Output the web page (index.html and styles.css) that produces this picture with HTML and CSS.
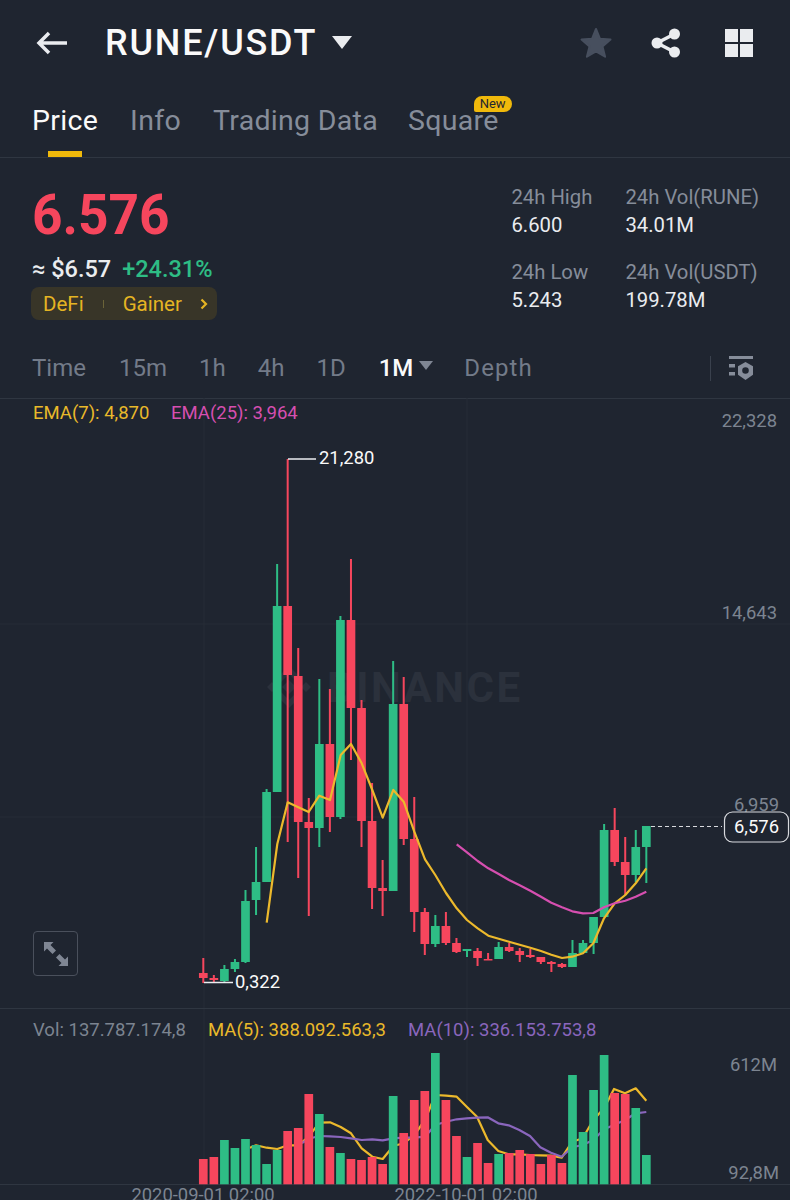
FILE: index.html
```html
<!DOCTYPE html>
<html lang="en">
  <head>
    <meta charset="UTF-8" />
    <title>RUNE/USDT</title>
    <link rel="stylesheet" href="styles.css">
  </head>
  <body>
    <header class="top-bar">
      <svg class="back-icon" viewBox="0 0 32 24"><path d="M31 12H3M13 2 3 12l10 10" /></svg>
      <h1 class="pair">RUNE/USDT</h1>
      <span class="pair-caret"></span>
      <svg class="star-icon" viewBox="0 0 32 32"><path d="M16 2l4 9.800 10.500.8-8 6.800 2.600 10.300L16 24.300 6.900 29.700l2.600-10.300-8-6.800 10.500-.8z" /></svg>
      <svg class="share-icon" viewBox="0 0 30 30">
        <circle cx="23.500" cy="6" r="5.500" />
        <circle cx="6" cy="15" r="5.500" />
        <circle cx="23.500" cy="24" r="5.500" />
        <path d="M23.500 6 6 15l17.500 9" />
      </svg>
      <div class="grid-icon"><i></i><i></i><i></i><i></i></div>
    </header>

    <nav class="tabs">
      <a class="tab active">Price</a>
      <a class="tab">Info</a>
      <a class="tab">Trading Data</a>
      <a class="tab tab-square">Square<span class="new-badge">New</span></a>
    </nav>

    <section class="ticker">
      <div class="ticker-left">
        <div class="last-price">6.576</div>
        <div class="fiat-row">
          <span class="fiat">≈ $6.57</span>
          <span class="change">+24.31%</span>
        </div>
        <div class="tag-box">
          <span>DeFi</span>
          <span class="tag-sep"></span>
          <span>Gainer</span>
          <svg class="tag-arrow" viewBox="0 0 8 12"><path d="M1.500 1.500 6 6l-4.500 4.500" /></svg>
        </div>
      </div>
      <div class="stats">
        <div class="stat"><label>24h High</label><b>6.600</b></div>
        <div class="stat"><label>24h Vol(RUNE)</label><b>34.01M</b></div>
        <div class="stat"><label>24h Low</label><b>5.243</b></div>
        <div class="stat"><label>24h Vol(USDT)</label><b>199.78M</b></div>
      </div>
    </section>

    <nav class="intervals">
      <a class="int int-time">Time</a>
      <a class="int int-15m">15m</a>
      <a class="int int-1h">1h</a>
      <a class="int int-4h">4h</a>
      <a class="int int-1d">1D</a>
      <a class="int int-1m">1M</a>
      <span class="int-caret"></span>
      <a class="int int-depth">Depth</a>
      <span class="int-sep"></span>
      <svg class="settings-icon" viewBox="0 0 26 26">
        <path d="M1 1h24v3H1zM1 9h6v3.500H1zM1 17h6v3.500H1z" />
        <path fill-rule="evenodd" d="M17.500 7l7.500 4.200v8.600L17.500 25 10 19.800v-8.600zM17.500 12.200a3.300 3.300 0 1 0 0 6.600 3.300 3.300 0 0 0 0-6.600z" />
      </svg>
    </nav>

    <div class="chart-wrap">
      <svg id="chart" class="chart" viewBox="0 398 790 802">
        <g class="grid-lines">
          <path d="M0 624H790M0 817H790M204 398V1200M467 398V1200" />
        </g>
        <path class="section-line" d="M0 1008.500H790M0 1184.500H790" />

        <text class="watermark" x="327" y="702">BINANCE</text>
        <path class="watermark-logo" d="M289 680l7 7-7 7-7-7zM272 682l5 5-5 5-5-5zM306 682l5 5-5 5-5-5zM289 666l13 13-4 4-9-9-9 9-4-4zM289 708l13-13-4-4-9 9-9-9-4 4z" />

        <g id="candles"></g>
        <g id="emaLines"></g>

        <path class="mark-line" d="M288 459H316M204 982.500H233" />
        <text class="mark" x="319" y="464">21,280</text>
        <text class="mark" x="235" y="988">0,322</text>

        <text class="legend ema7" x="33" y="419">EMA(7): 4,870</text>
        <text class="legend ema25" x="171" y="419">EMA(25): 3,964</text>
        <text class="axis" x="777" y="427" text-anchor="end">22,328</text>
        <text class="axis" x="777" y="619" text-anchor="end">14,643</text>
        <text class="axis" x="779" y="811" text-anchor="end">6,959</text>

        <path class="last-line" d="M651 826.500H722" />
        <rect class="last-pill" x="724.500" y="812" width="64" height="30" rx="8" />
        <text class="last-text" x="756.500" y="833" text-anchor="middle">6,576</text>

        <text class="legend vol" x="33" y="1036">Vol: 137.787.174,8</text>
        <text class="legend ema7" x="208" y="1036">MA(5): 388.092.563,3</text>
        <text class="legend ma10" x="408" y="1036">MA(10): 336.153.753,8</text>

        <g id="volLines"></g>
        <g id="volBars"></g>

        <text class="axis" x="777" y="1071" text-anchor="end">612M</text>
        <text class="axis" x="779" y="1179" text-anchor="end">92,8M</text>
        <text class="axis" x="203" y="1201" text-anchor="middle">2020-09-01 02:00</text>
        <text class="axis" x="466" y="1201" text-anchor="middle">2022-10-01 02:00</text>
      </svg>

      <button class="expand-btn">
        <svg viewBox="0 0 26 26"><path d="M1 1h9.500L7.500 4l5.500 5.500-3.500 3.500L4 7.500 1 10.500zM25 25h-9.500l3-3-5.500-5.500 3.500-3.500L22 18.500l3-3z" /></svg>
      </button>
    </div>

    <script src="chart.js"></script>
  </body>
</html>
```

FILE: styles.css
```css
* {
  box-sizing: border-box;
}

html,
body {
  margin: 0;
  height: 1200px;
  overflow: hidden;
}

body {
  font-family: Roboto, "Liberation Sans", sans-serif;
  background-color: #1f2530;
  color: #eaecef;
}

/* top bar */
.top-bar {
  display: flex;
  align-items: center;
  height: 86px;
  padding-left: 36px;
}

.back-icon {
  width: 32px;
  height: 24px;
  fill: none;
  stroke: #eaecef;
  stroke-width: 3.5;
}

.pair {
  margin: 0 0 0 37px;
  font-size: 36px;
  font-weight: 500;
  letter-spacing: 1.8px;
  color: #fafafa;
}

.pair-caret {
  width: 0;
  height: 0;
  margin: 0 0 2px 15px;
  border-left: 10px solid transparent;
  border-right: 10px solid transparent;
  border-top: 13px solid #eaecef;
}

.star-icon {
  width: 32px;
  height: 32px;
  margin-left: auto;
  fill: #474f5e;
  stroke: #474f5e;
  stroke-width: 2;
  stroke-linejoin: round;
}

.share-icon {
  width: 30px;
  height: 30px;
  margin-left: 39px;
  fill: #eaecef;
  stroke: #eaecef;
}

.share-icon circle {
  stroke: none;
}

.share-icon path {
  fill: none;
  stroke-width: 3.5;
}

.grid-icon {
  display: grid;
  grid-template-columns: 13px 13px;
  grid-template-rows: 13px 13px;
  gap: 2px;
  margin: 0 37px 0 44px;
}

.grid-icon i {
  background-color: #eaecef;
}

/* main tabs */
.tabs {
  display: flex;
  gap: 32px;
  height: 72px;
  padding: 13px 0 0 32px;
  border-bottom: 1px solid #2f3641;
}

.tab {
  position: relative;
  font-size: 28.500px;
  line-height: 44px;
  letter-spacing: 0.3px;
  color: #868d9a;
}

.tab-square {
  margin-left: -2px;
}

.tab.active {
  color: #fafafa;
}

.tab.active::after {
  content: "";
  position: absolute;
  left: 16px;
  right: 16px;
  top: 52px;
  height: 6px;
  background-color: #f0b90b;
}

.new-badge {
  position: absolute;
  top: -3px;
  right: -13px;
  padding: 0 6px;
  font-size: 13px;
  line-height: 16px;
  letter-spacing: 0;
  color: #1f2530;
  background-color: #f0b90b;
  border-radius: 8px 8px 8px 2px;
}

/* price block */
.ticker {
  display: flex;
  justify-content: space-between;
  height: 185px;
  padding: 26px 31px 0 32px;
}

.last-price {
  font-size: 56px;
  font-weight: 700;
  line-height: 62px;
  color: #f6465d;
  transform: scaleX(0.95);
  transform-origin: left center;
}

.fiat-row {
  display: flex;
  gap: 11px;
  margin-top: 8px;
  font-size: 23.500px;
  font-weight: 500;
  line-height: 30px;
}

.change {
  color: #2ebd85;
}

.tag-box {
  display: flex;
  align-items: center;
  width: 186px;
  height: 33px;
  margin: 3px 0 0 -1px;
  padding-left: 12px;
  font-size: 20.500px;
  color: #e5b423;
  background-color: #383528;
  border-radius: 8px;
}

.tag-sep {
  width: 1px;
  height: 8px;
  margin: 0 19px;
  background-color: #6b6338;
}

.tag-arrow {
  width: 8px;
  height: 12px;
  margin-left: 18px;
  fill: none;
  stroke: #e5b423;
  stroke-width: 2.2;
}

.stats {
  display: grid;
  grid-template-columns: 114px auto;
  align-content: start;
  row-gap: 20px;
  margin-top: -1px;
}

.stat label {
  display: block;
  font-size: 20.300px;
  line-height: 28px;
  color: #868d9a;
}

.stat b {
  display: block;
  margin-top: 1px;
  font-size: 20.300px;
  font-weight: 400;
  line-height: 26px;
  color: #eaecef;
}

/* interval row */
.intervals {
  display: flex;
  align-items: center;
  height: 50px;
  margin-bottom: 5px;
  padding-left: 32px;
  font-size: 24px;
  color: #737b89;
}

.int-15m {
  margin-left: 33px;
}

.int-1h,
.int-4h,
.int-1d {
  margin-left: 32px;
}

.int-1m {
  margin-left: 33px;
  font-weight: 500;
  color: #fafafa;
}

.int-caret {
  width: 0;
  height: 0;
  margin: 0 0 5px 6px;
  border-left: 7px solid transparent;
  border-right: 7px solid transparent;
  border-top: 9px solid #7f8693;
}

.int-depth {
  margin-left: 31px;
  letter-spacing: 1.1px;
}

.int-sep {
  width: 1px;
  height: 25px;
  margin-left: auto;
  background-color: #3a414d;
}

.settings-icon {
  width: 26px;
  height: 26px;
  margin: 0 36px 0 17px;
  fill: #868d9a;
}

/* chart */
.chart-wrap {
  position: relative;
  height: 802px;
  border-top: 1px solid #2f3641;
}

.chart {
  display: block;
  width: 790px;
  height: 802px;
  margin-top: -1px;
}

.grid-lines path {
  fill: none;
  stroke: #262c37;
  stroke-width: 1;
}

.section-line {
  fill: none;
  stroke: #2f3641;
  stroke-width: 1;
}

.watermark {
  font-size: 42px;
  font-weight: 700;
  letter-spacing: 2.500px;
  fill: #2b313c;
}

.watermark-logo {
  fill: #2b313c;
}

.mark-line {
  fill: none;
  stroke: #eaecef;
  stroke-width: 1.5;
}

.mark {
  font-size: 18.400px;
  fill: #fafafa;
}

.legend {
  font-size: 18.500px;
}

.ema7 {
  fill: #e9b92a;
}

.ema25 {
  fill: #d64fb0;
}

.ma10 {
  fill: #8a66bd;
}

.vol {
  fill: #7c8490;
}

.axis {
  font-size: 18.400px;
  fill: #7c8490;
}

.last-line {
  fill: none;
  stroke: #d8dade;
  stroke-width: 1;
  stroke-dasharray: 4 3;
}

.last-pill {
  fill: #1f2530;
  stroke: #d8dade;
  stroke-width: 1.2;
}

.last-text {
  font-size: 18.400px;
  fill: #fafafa;
}

.expand-btn {
  position: absolute;
  left: 33px;
  top: 532px;
  display: flex;
  align-items: center;
  justify-content: center;
  width: 45px;
  height: 45px;
  padding: 0;
  background: none;
  border: 1.5px solid #4a505c;
  border-radius: 4px;
}

.expand-btn svg {
  width: 26px;
  height: 26px;
  fill: #7f8693;
}
```

FILE: chart.js
```js
// month candles, values are already page y coordinates
// [wick top, body top, body bottom, wick bottom, up?]
const candles = [
  [958, 973, 978, 983, 0], [975, 978, 980, 982, 0], [965, 969, 981, 982, 1],
  [959, 962, 969, 972, 1], [890, 901, 962, 963, 1], [847, 882, 900, 915, 1],
  [789, 792, 882, 882, 1], [564, 606, 792, 792, 1], [459, 606, 675, 842, 0],
  [648, 676, 822, 878, 0], [798, 822, 828, 916, 0], [679, 744, 828, 847, 1],
  [689, 744, 817, 832, 0], [616, 620, 817, 819, 1], [559, 620, 708, 760, 0],
  [700, 708, 821, 847, 0], [783, 821, 888, 909, 0], [860, 888, 891, 916, 0],
  [661, 704, 891, 891, 1], [677, 704, 839, 845, 0], [797, 839, 912, 932, 0],
  [908, 912, 944, 955, 0], [915, 926, 944, 947, 1], [912, 926, 943, 945, 0],
  [938, 943, 952, 953, 0], [949, 949, 951, 957, 1], [948, 951, 958, 966, 0],
  [953, 959, 960, 960, 0], [942, 947, 959, 959, 1], [943, 947, 951, 952, 0],
  [948, 951, 955, 962, 0], [949, 955, 957, 958, 0], [957, 957, 962, 964, 0],
  [961, 962, 964, 972, 0], [963, 964, 967, 968, 0], [940, 953, 967, 967, 1],
  [940, 943, 953, 953, 1], [917, 917, 943, 954, 1], [824, 830, 917, 917, 1],
  [808, 830, 862, 866, 0], [837, 862, 875, 895, 0], [830, 847, 875, 882, 1],
  [826, 826, 847, 883, 1],
];

const volumes = [
  1159, 1157, 1140, 1148, 1139, 1145, 1164, 1150, 1131, 1128, 1094, 1114, 1147,
  1153, 1159, 1160, 1157, 1164, 1096, 1133, 1100, 1091, 1053, 1100, 1136, 1157,
  1143, 1163, 1154, 1153, 1150, 1154, 1164, 1155, 1163, 1075, 1132, 1090, 1055,
  1093, 1094, 1108, 1155,
];

const ema7 = "266.7,922.7 277.3,844 287.7,802.3 298.3,807.3 308.7,812 319.3,795.7 330,800 340.7,755 351,744 361.7,763.3 372.3,790 382.7,817.7 393.3,790 403.7,801.7 414.3,831.7 425,859.3 435.3,875 446,893 456.7,908.3 467,920 477.7,928.3 488.3,935.7 498.7,938.7 509,941.7 519.7,944.7 530.3,947.7 541,951 551.3,954.7 562,958 572.3,956.7 583,953.3 593.3,943.3 604,918.3 614.7,903.3 625.3,895 635.7,883.3 646.3,868.3";
const ema25 = "456.7,844.3 467,852.3 477.7,861 488.3,868.3 498.7,874 509,880 519.7,885.3 530.3,890.7 541,896.7 551.3,902.7 562,907.3 572.3,911.3 583,913.3 593.3,913 604,907.3 614.7,903.3 625.3,900.7 635.7,896.7 646.3,891.7";
const ma5 = "250,1147.7 256,1145.3 266.7,1147.7 277.3,1149 287.7,1145.3 298.3,1145.3 308.7,1136.7 319.3,1122.7 330,1122.3 340.7,1127 351,1133.3 361.7,1148.3 372.3,1156.7 382.7,1159 393.3,1146 403.7,1143.3 414.3,1135 425,1120 435.3,1095 446,1095.7 456.7,1096.7 466.7,1106.7 477,1116.7 487.7,1140 498.3,1151 508.7,1154.3 519.3,1154.3 530,1155 540.3,1155.3 551,1155.7 561.7,1157.7 572.3,1141.7 582.7,1138.3 593.3,1120 604,1108.3 614,1089 625,1093.3 635.7,1088.3 646.3,1100.7";
const ma10 = "302,1143 308.7,1138.7 319.3,1136 330,1136.3 340.7,1137 351,1138.3 361.7,1140 372.3,1139.3 382.7,1140.3 393.3,1138.3 403.7,1137.7 414.3,1137.7 425,1136.7 435.3,1125 446,1121.7 456.7,1119.3 466.7,1118.3 477,1117.7 487.7,1117.3 498.3,1123.3 508.7,1125.3 519.3,1130 530,1136 540.3,1147.3 551,1152.7 561.7,1156.7 572.3,1147.3 582.7,1145 593.3,1140 604,1129.3 614,1125 625,1120 635.7,1113.3 646.3,1112";

const GREEN = "#2ebd85";
const RED = "#f6465d";
const YELLOW = "#ecb92c";
const STEP = 10.548;
const BODY = 8.7;
const NS = "http://www.w3.org/2000/svg";

function add(parent, tag, attrs) {
  const el = document.createElementNS(NS, tag);
  for (const key in attrs) el.setAttribute(key, attrs[key]);
  document.getElementById(parent).appendChild(el);
}

function line(parent, points, color, width) {
  add(parent, "polyline", { points, fill: "none", stroke: color, "stroke-width": width, "stroke-linejoin": "round" });
}

candles.forEach(function (c, i) {
  const x = 203.3 + i * STEP;
  const color = c[4] ? GREEN : RED;
  add("candles", "rect", { x: x - 1, y: c[0], width: 2, height: c[3] - c[0], fill: color });
  add("candles", "rect", { x: x - BODY / 2, y: c[1], width: BODY, height: Math.max(c[2] - c[1], 1.5), fill: color });
  add("volBars", "rect", { x: x - BODY / 2, y: volumes[i], width: BODY, height: 1184.3 - volumes[i], fill: color });
});

line("emaLines", ema7, YELLOW, 2.2);
line("emaLines", ema25, "#d64fb0", 2.2);
line("volLines", ma5, YELLOW, 2.2);
line("volLines", ma10, "#8a66bd", 2.2);
```
